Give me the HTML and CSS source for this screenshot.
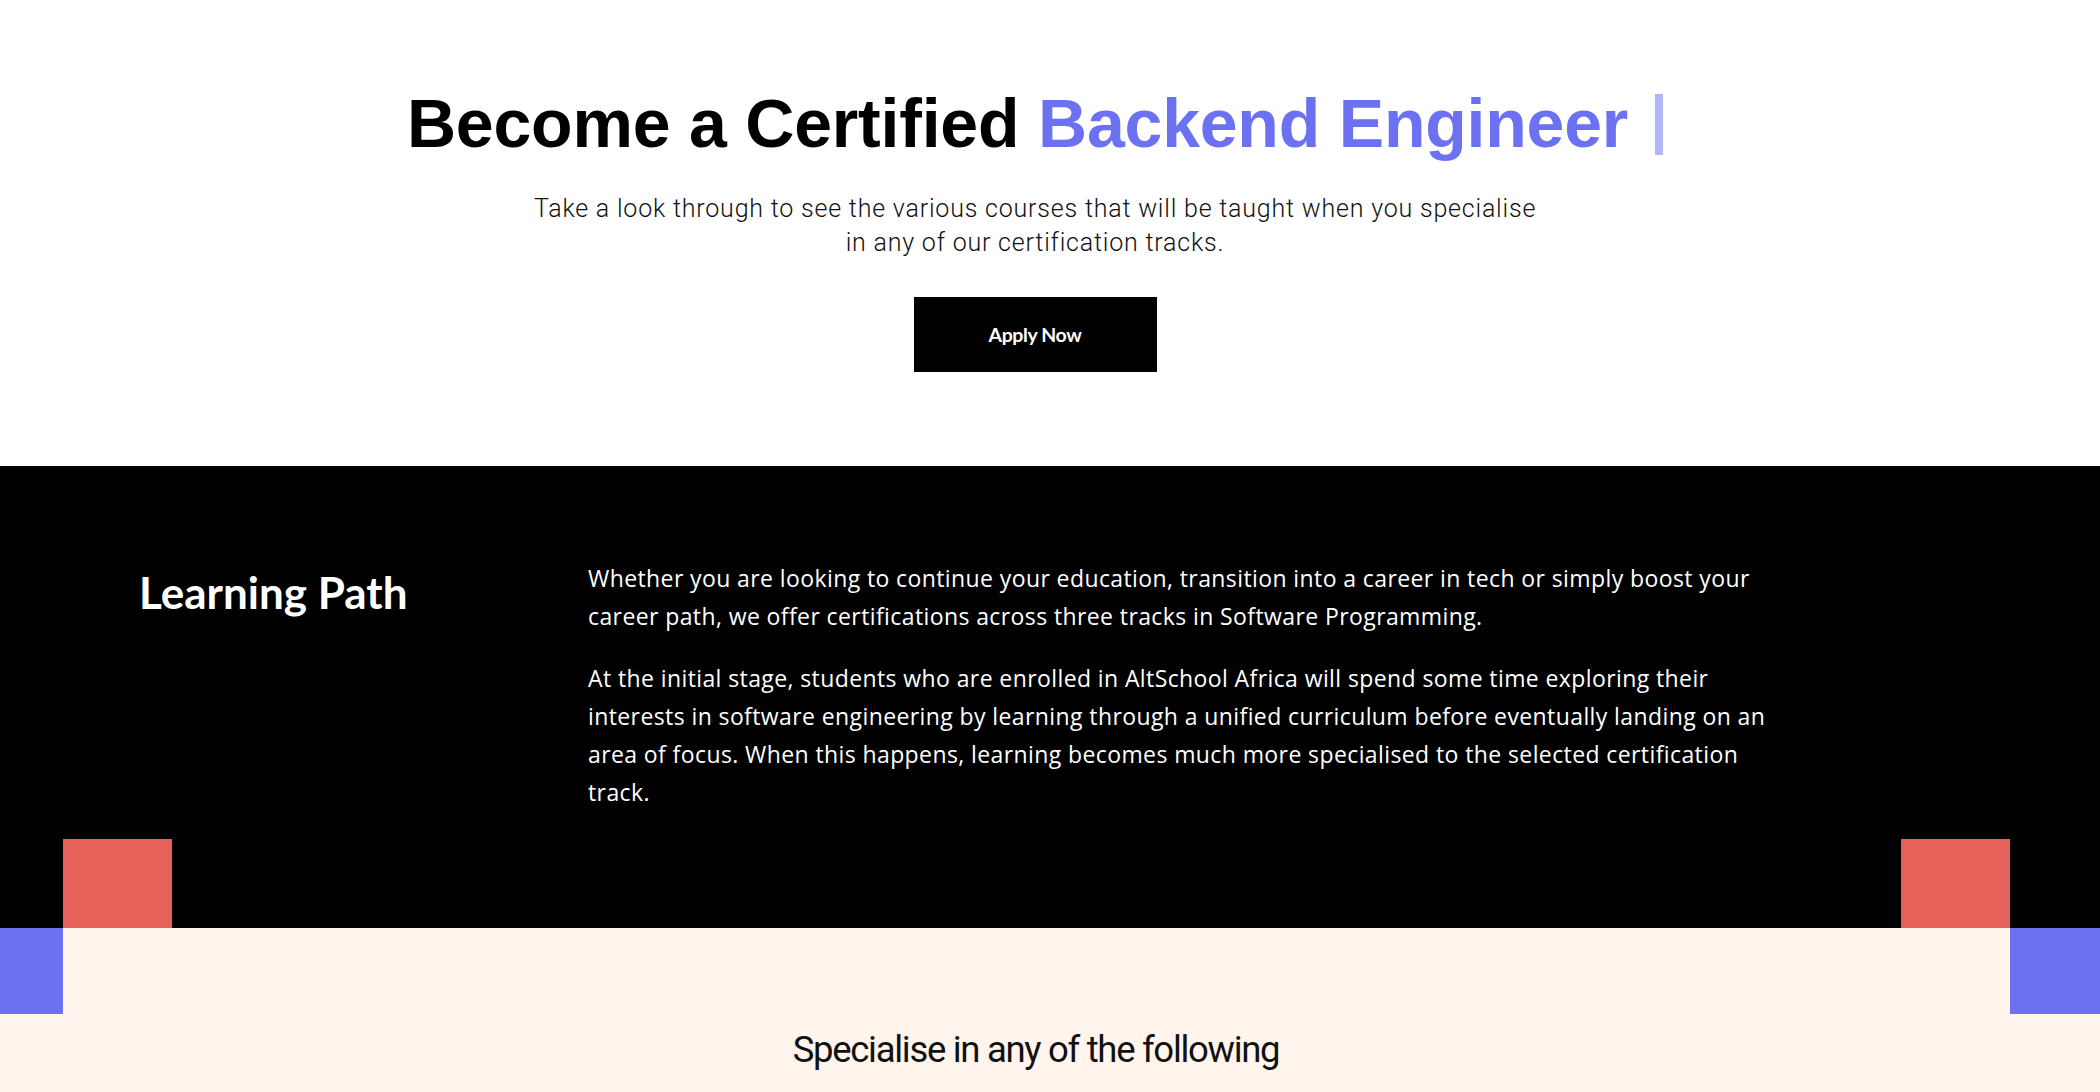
FILE: index.html
```html
<!DOCTYPE html>
<html lang="en">
<head>
<meta charset="utf-8">
<title>Backend Engineering - AltSchool Africa</title>
<link rel="stylesheet" href="styles.css">
</head>
<body>
  <section class="hero">
    <h1 class="hero-title">Become a Certified <span class="accent">Backend Engineer</span><span class="cursor"></span></h1>
    <p class="hero-sub">Take a look through to see the various courses that will be taught when you specialise in any of our certification tracks.</p>
    <a class="btn-apply" href="#">Apply Now</a>
  </section>

  <section class="path">
    <h2 class="path-title">Learning Path</h2>
    <div class="path-body">
      <p>Whether you are looking to continue your education, transition into a career in tech or simply boost your career path, we offer certifications across three tracks in Software Programming.</p>
      <p>At the initial stage, students who are enrolled in AltSchool Africa will spend some time exploring their interests in software engineering by learning through a unified curriculum before eventually landing on an area of focus. When this happens, learning becomes much more specialised to the selected certification track.</p>
    </div>
  </section>

  <section class="tracks">
    <span class="deco deco-red deco-left"></span>
    <span class="deco deco-blue deco-left"></span>
    <span class="deco deco-red deco-right"></span>
    <span class="deco deco-blue deco-right"></span>
    <h2 class="tracks-title">Specialise in any of the following</h2>
  </section>
</body>
</html>
```

FILE: styles.css
```css
* { box-sizing: border-box; }

body {
  margin: 0;
  background: #ffffff;
  color: #000000;
  font-family: "Liberation Sans", Arial, sans-serif;
}

.hero {
  display: flex;
  flex-direction: column;
  align-items: center;
  padding: 83px 30px 0 0;
  height: 466px;
  text-align: center;
}

.hero-title {
  margin: 0;
  font-family: "Liberation Sans", Arial, sans-serif;
  font-size: 68px;
  font-weight: 700;
  line-height: 1.2;
  letter-spacing: -0.2px;
  white-space: nowrap;
}

.accent { color: #6c71f1; }

.cursor {
  display: inline-block;
  width: 8px;
  height: 61px;
  margin-left: 27px;
  vertical-align: -8px;
  background: #b3b6f4;
}

.hero-sub {
  margin: 27px 0 0;
  max-width: 1016px;
  font-family: "Roboto", sans-serif;
  font-size: 25px;
  font-weight: 300;
  line-height: 34px;
  letter-spacing: 0.8px;
  color: #111111;
}

.btn-apply {
  display: flex;
  align-items: center;
  justify-content: center;
  width: 243px;
  height: 75px;
  margin-top: 37px;
  background: #000000;
  color: #ffffff;
  text-decoration: none;
  font-family: "Lato", sans-serif;
  font-weight: 700;
  font-size: 19.5px;
  letter-spacing: -0.4px;
}

.path {
  display: grid;
  grid-template-columns: 449px minmax(0, 1195px);
  align-items: start;
  min-height: 462px;
  padding: 93px 0 80px 139px;
  background: #000000;
  color: #ffffff;
}

.path-title {
  margin: 7px 0 0;
  font-family: "Lato", sans-serif;
  font-size: 44px;
  font-weight: 700;
  line-height: 1.2;
}

.path-body p {
  margin: 0 0 24px;
  font-family: "Open Sans", sans-serif;
  font-size: 23px;
  line-height: 38px;
  letter-spacing: 0.4px;
}

.path-body p:last-child { margin-bottom: 0; }

.tracks {
  position: relative;
  background: #fff5ec;
  padding: 100px 28px 120px 0;
  text-align: center;
}

.deco {
  position: absolute;
  display: block;
}

.deco-red {
  top: -89px;
  width: 109px;
  height: 89px;
  background: #e5615a;
}

.deco-blue {
  top: 0;
  height: 86px;
  background: #6c71f2;
}

.deco-red.deco-left { left: 63px; }
.deco-blue.deco-left { left: 0; width: 63px; }
.deco-red.deco-right { right: 90px; }
.deco-blue.deco-right { right: 0; width: 90px; }

.tracks-title {
  margin: 0;
  font-family: "Roboto", sans-serif;
  font-size: 36.5px;
  font-weight: 400;
  line-height: 1.2;
  letter-spacing: -1.3px;
  color: #111111;
}
```
